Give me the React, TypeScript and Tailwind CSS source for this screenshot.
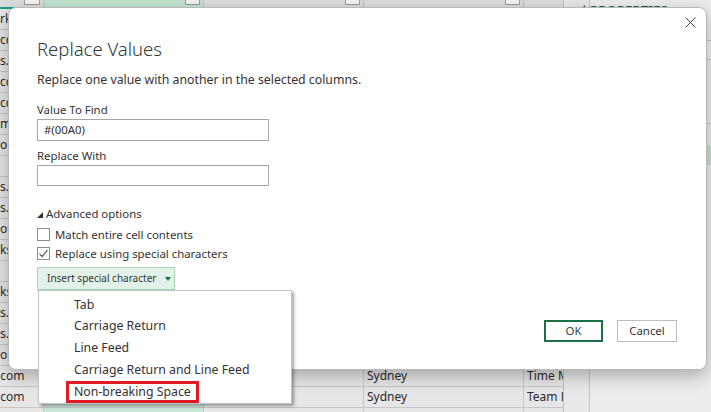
import React from "react";

const col0 = ["rk", "cc", "s.c", "cc", "cc", "m", "om", "", "s.c", "s.c", "or", "ks", "", "ks", "s.c", "s.c", "on", "com", "com", ""];
const col3: Record<number, string> = { 17: "Sydney", 18: "Sydney" };
const col4: Record<number, string> = { 17: "Time M", 18: "Team L" };

function Grid() {
  const rows = Array.from({ length: 20 }, (_, i) => i);
  return (
    <div className="flex flex-col w-[563px] shrink-0">
      <div className="flex h-[7px] shrink-0 bg-[#dcdcdc]">
        <div className="w-[44px] border-r border-[#c4c4c4] flex justify-end pr-[3px]">
          <div className="w-[16px] h-[5px] border border-[#9a9a9a] bg-[#f4f4f4] border-t-0" />
        </div>
        <div className="w-[160px] border-r border-[#c4c4c4] bg-[#c3e4d2] flex justify-end pr-[3px]">
          <div className="w-[15px] h-[5px] border border-[#9a9a9a] bg-[#f4f4f4] border-t-0" />
        </div>
        <div className="w-[160px] border-r border-[#c4c4c4] flex justify-end pr-[3px]">
          <div className="w-[15px] h-[5px] border border-[#9a9a9a] bg-[#f4f4f4] border-t-0" />
        </div>
        <div className="w-[160px] border-r border-[#c4c4c4] flex justify-end pr-[3px]">
          <div className="w-[15px] h-[5px] border border-[#9a9a9a] bg-[#f4f4f4] border-t-0" />
        </div>
        <div className="flex-1" />
      </div>
      <div className="h-[2px] shrink-0 bg-[#14a08c]" />
      {rows.map((r) => (
        <div key={r} className="flex shrink-0 h-[21px] border-b border-[#c6c6c6] text-[12px] leading-[20px] text-[#2a2a2a]">
          <div className="w-[44px] border-r border-[#c6c6c6] overflow-hidden whitespace-nowrap bg-[#e6e6e6]">
            {col0[r] === "com" ? <span className="-ml-[3px]">.com</span> : col0[r]}
          </div>
          <div className="w-[160px] border-r border-[#c6c6c6] bg-[#c9e7d6]" />
          <div className="w-[160px] border-r border-[#c6c6c6] bg-[#e6e6e6]" />
          <div className="w-[160px] border-r border-[#c6c6c6] bg-[#e6e6e6] pl-[3px] overflow-hidden whitespace-nowrap">
            {col3[r] ?? ""}
          </div>
          <div className="flex-1 bg-[#e6e6e6] pl-[3px] overflow-hidden whitespace-nowrap">{col4[r] ?? ""}</div>
        </div>
      ))}
    </div>
  );
}

function RightPanel() {
  return (
    <div className="flex-1 flex bg-[#e8e8e8] border-l border-[#c0c0c0]">
      <div className="w-[26px] border-r border-[#c4c4c4] flex flex-col items-end pr-[4px] pt-[5px]">
        <svg width="5" height="5" viewBox="0 0 5 5">
          <path d="M0 5 L5 5 L5 0 Z" fill="#333" />
        </svg>
      </div>
      <div className="flex-1 flex flex-col bg-[#ededed]">
        <div className="h-[40px] text-[13px] font-bold text-[#1d5e54] leading-[14px] pt-[3px] whitespace-nowrap">
          PROPERTIES
        </div>
        <div className="h-[20px] border-t border-b border-[#c4c4c4] bg-[#f2f2f2]" />
        <div className="h-[64px] border-b border-[#c4c4c4]" />
        <div className="h-[21px]" />
        <div className="h-[20px] bg-[#c6e3d3]" />
        <div className="flex-1" />
      </div>
    </div>
  );
}

function CheckBox({ checked }: { checked?: boolean }) {
  return (
    <div className="w-[13px] h-[13px] shrink-0 border border-[#8c8c8c] bg-white flex items-center justify-center">
      {checked && (
        <svg width="11" height="11" viewBox="0 0 11 11">
          <path d="M1.5 5.8 L4.2 8.5 L9.5 2.2" fill="none" stroke="#5a5a5a" strokeWidth="1.2" />
        </svg>
      )}
    </div>
  );
}

export default function App() {
  const font = { fontFamily: '"Noto Sans", "Open Sans", sans-serif' };
  return (
    <div className="relative w-[711px] h-[412px] overflow-hidden bg-[#e6e6e6]" style={font}>
      <div className="flex h-full">
        <Grid />
        <RightPanel />
      </div>

      {/* Dialog */}
      <div className="absolute left-[8px] top-[7px] w-[699px] h-[363px] bg-white rounded-[8px] shadow-[0_6px_18px_rgba(0,0,0,0.28)] border border-[#b8b8b8] text-[#333]">
        <button className="absolute right-[10px] top-[8px] w-[12px] h-[12px] flex items-center justify-center">
          <svg width="11" height="11" viewBox="0 0 11 11">
            <path d="M0.5 0.5 L10.5 10.5 M10.5 0.5 L0.5 10.5" stroke="#444" strokeWidth="1" />
          </svg>
        </button>
        <div className="flex flex-col pl-[28px] pt-[27px]">
          <div className="text-[18.5px] leading-[28px] font-light text-[#2f3b3a]">Replace Values</div>
          <div className="text-[12.3px] leading-[20px] mt-[7px]">Replace one value with another in the selected columns.</div>
          <div className="text-[11.4px] leading-[18px] mt-[11px]">Value To Find</div>
          <div className="w-[232px] h-[22px] border border-[#a6a6a6] text-[11.4px] leading-[20px] pl-[6px]">#(00A0)</div>
          <div className="text-[11.4px] leading-[18px] mt-[6px]">Replace With</div>
          <div className="w-[232px] h-[21px] border border-[#a6a6a6]" />
          <div className="flex items-center mt-[19px] h-[18px] text-[11.4px]">
            <svg width="7" height="7" viewBox="0 0 7 7" className="mr-[2px] mt-[2px]">
              <path d="M0 6 L6 6 L6 0 Z" fill="#333" />
            </svg>
            <span>Advanced options</span>
          </div>
          <div className="flex items-center gap-[5px] mt-[2px] h-[19px] text-[11.4px]">
            <CheckBox />
            <span>Match entire cell contents</span>
          </div>
          <div className="flex items-center gap-[5px] h-[19px] text-[11.4px]">
            <CheckBox checked />
            <span>Replace using special characters</span>
          </div>
          <div className="mt-[4px] w-[138px] h-[23px] bg-[#e3f2e8] border border-[#a8d5b9] flex items-center pl-[9px] text-[10px] text-[#333] whitespace-nowrap">
            <span>Insert special character</span>
            <svg width="6" height="4" viewBox="0 0 6 4" className="ml-[9px]">
              <path d="M0 0 L6 0 L3 4 Z" fill="#1f6b45" />
            </svg>
          </div>
        </div>
        <div className="absolute right-[29px] top-[312px] flex gap-[14px]">
          <button className="w-[59px] h-[22px] border-2 border-[#1e6e48] text-[11.4px] text-[#2a4a4a] flex items-center justify-center">OK</button>
          <button className="w-[60px] h-[22px] border border-[#bdbdbd] text-[11.4px] text-[#333] flex items-center justify-center">Cancel</button>
        </div>
      </div>

      {/* Dropdown menu */}
      <div className="absolute left-[38px] top-[290px] w-[254px] h-[114px] bg-white border border-[#c2c2c2] shadow-[2px_2px_3px_rgba(0,0,0,0.35)] flex flex-col pt-[3px] text-[12.3px] text-[#333]">
        {["Tab", "Carriage Return", "Line Feed", "Carriage Return and Line Feed", "Non-breaking Space"].map((t, i) => (
          <div key={t} className="h-[22px] flex items-center pl-[35px]">
            {i === 4 ? (
              <span className="-ml-[8px] border-[3px] border-[#e01b24] px-[5px] leading-[16px] whitespace-nowrap">{t}</span>
            ) : (
              <span className="whitespace-nowrap">{t}</span>
            )}
          </div>
        ))}
      </div>
    </div>
  );
}
